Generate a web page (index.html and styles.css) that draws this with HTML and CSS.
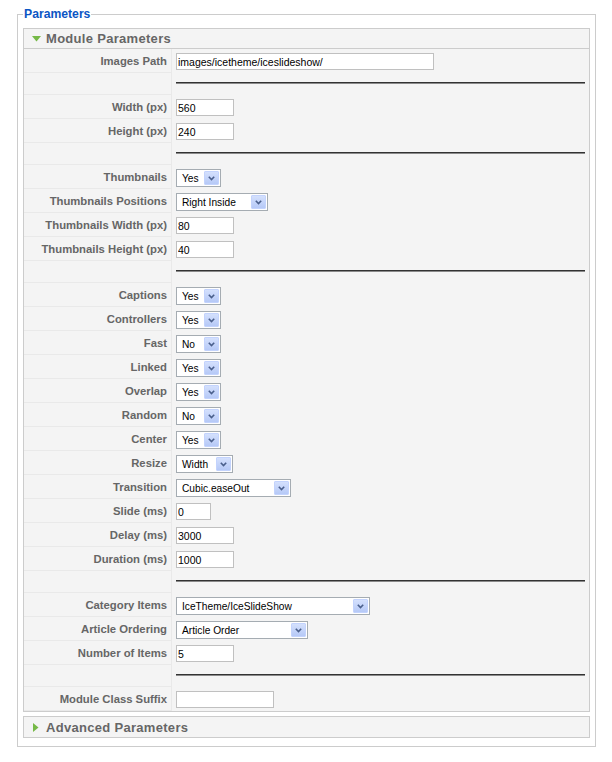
FILE: index.html
```html
<!DOCTYPE html>
<html>
<head>
<meta charset="utf-8">
<title>Parameters</title>
<link rel="stylesheet" href="styles.css">
</head>
<body>
<fieldset class="params">
  <legend class="params-legend">Parameters</legend>
  <div class="panel">
    <h3 class="panel-title open">
      <svg class="tri-down" width="9" height="6" viewBox="0 0 9 6"><polygon points="0,0 9,0 4.5,5.5" fill="#76b947"/></svg>
      <span>Module Parameters</span>
    </h3>
    <div class="paramlist">
      <div class="prow"><div class="key">Images Path</div><div class="val"><input class="txt w258" type="text" value="images/icetheme/iceslideshow/"></div></div>
      <div class="prow spacer"><div class="key"></div><div class="val"><hr class="sep"></div></div>
      <div class="prow"><div class="key">Width (px)</div><div class="val"><input class="txt w58" type="text" value="560"></div></div>
      <div class="prow"><div class="key">Height (px)</div><div class="val"><input class="txt w58" type="text" value="240"></div></div>
      <div class="prow spacer"><div class="key"></div><div class="val"><hr class="sep"></div></div>
      <div class="prow"><div class="key">Thumbnails</div><div class="val"><span class="sel w45"><span class="sel-text">Yes</span><span class="sel-btn"><svg width="7" height="5" viewBox="0 0 7 5"><path d="M0.8 0.8 L3.5 3.6 L6.2 0.8" fill="none" stroke="#4a5f8c" stroke-width="1.6"/></svg></span></span></div></div>
      <div class="prow"><div class="key">Thumbnails Positions</div><div class="val"><span class="sel w92"><span class="sel-text">Right Inside</span><span class="sel-btn"><svg width="7" height="5" viewBox="0 0 7 5"><path d="M0.8 0.8 L3.5 3.6 L6.2 0.8" fill="none" stroke="#4a5f8c" stroke-width="1.6"/></svg></span></span></div></div>
      <div class="prow"><div class="key">Thumbnails Width (px)</div><div class="val"><input class="txt w58" type="text" value="80"></div></div>
      <div class="prow"><div class="key">Thumbnails Height (px)</div><div class="val"><input class="txt w58" type="text" value="40"></div></div>
      <div class="prow spacer"><div class="key"></div><div class="val"><hr class="sep"></div></div>
      <div class="prow"><div class="key">Captions</div><div class="val"><span class="sel w45"><span class="sel-text">Yes</span><span class="sel-btn"><svg width="7" height="5" viewBox="0 0 7 5"><path d="M0.8 0.8 L3.5 3.6 L6.2 0.8" fill="none" stroke="#4a5f8c" stroke-width="1.6"/></svg></span></span></div></div>
      <div class="prow"><div class="key">Controllers</div><div class="val"><span class="sel w45"><span class="sel-text">Yes</span><span class="sel-btn"><svg width="7" height="5" viewBox="0 0 7 5"><path d="M0.8 0.8 L3.5 3.6 L6.2 0.8" fill="none" stroke="#4a5f8c" stroke-width="1.6"/></svg></span></span></div></div>
      <div class="prow"><div class="key">Fast</div><div class="val"><span class="sel w45"><span class="sel-text">No</span><span class="sel-btn"><svg width="7" height="5" viewBox="0 0 7 5"><path d="M0.8 0.8 L3.5 3.6 L6.2 0.8" fill="none" stroke="#4a5f8c" stroke-width="1.6"/></svg></span></span></div></div>
      <div class="prow"><div class="key">Linked</div><div class="val"><span class="sel w45"><span class="sel-text">Yes</span><span class="sel-btn"><svg width="7" height="5" viewBox="0 0 7 5"><path d="M0.8 0.8 L3.5 3.6 L6.2 0.8" fill="none" stroke="#4a5f8c" stroke-width="1.6"/></svg></span></span></div></div>
      <div class="prow"><div class="key">Overlap</div><div class="val"><span class="sel w45"><span class="sel-text">Yes</span><span class="sel-btn"><svg width="7" height="5" viewBox="0 0 7 5"><path d="M0.8 0.8 L3.5 3.6 L6.2 0.8" fill="none" stroke="#4a5f8c" stroke-width="1.6"/></svg></span></span></div></div>
      <div class="prow"><div class="key">Random</div><div class="val"><span class="sel w45"><span class="sel-text">No</span><span class="sel-btn"><svg width="7" height="5" viewBox="0 0 7 5"><path d="M0.8 0.8 L3.5 3.6 L6.2 0.8" fill="none" stroke="#4a5f8c" stroke-width="1.6"/></svg></span></span></div></div>
      <div class="prow"><div class="key">Center</div><div class="val"><span class="sel w45"><span class="sel-text">Yes</span><span class="sel-btn"><svg width="7" height="5" viewBox="0 0 7 5"><path d="M0.8 0.8 L3.5 3.6 L6.2 0.8" fill="none" stroke="#4a5f8c" stroke-width="1.6"/></svg></span></span></div></div>
      <div class="prow"><div class="key">Resize</div><div class="val"><span class="sel w57"><span class="sel-text">Width</span><span class="sel-btn"><svg width="7" height="5" viewBox="0 0 7 5"><path d="M0.8 0.8 L3.5 3.6 L6.2 0.8" fill="none" stroke="#4a5f8c" stroke-width="1.6"/></svg></span></span></div></div>
      <div class="prow"><div class="key">Transition</div><div class="val"><span class="sel w115"><span class="sel-text">Cubic.easeOut</span><span class="sel-btn"><svg width="7" height="5" viewBox="0 0 7 5"><path d="M0.8 0.8 L3.5 3.6 L6.2 0.8" fill="none" stroke="#4a5f8c" stroke-width="1.6"/></svg></span></span></div></div>
      <div class="prow"><div class="key">Slide (ms)</div><div class="val"><input class="txt w35" type="text" value="0"></div></div>
      <div class="prow"><div class="key">Delay (ms)</div><div class="val"><input class="txt w58" type="text" value="3000"></div></div>
      <div class="prow"><div class="key">Duration (ms)</div><div class="val"><input class="txt w58" type="text" value="1000"></div></div>
      <div class="prow spacer"><div class="key"></div><div class="val"><hr class="sep"></div></div>
      <div class="prow"><div class="key">Category Items</div><div class="val"><span class="sel w194"><span class="sel-text">IceTheme/IceSlideShow</span><span class="sel-btn"><svg width="7" height="5" viewBox="0 0 7 5"><path d="M0.8 0.8 L3.5 3.6 L6.2 0.8" fill="none" stroke="#4a5f8c" stroke-width="1.6"/></svg></span></span></div></div>
      <div class="prow"><div class="key">Article Ordering</div><div class="val"><span class="sel w132"><span class="sel-text">Article Order</span><span class="sel-btn"><svg width="7" height="5" viewBox="0 0 7 5"><path d="M0.8 0.8 L3.5 3.6 L6.2 0.8" fill="none" stroke="#4a5f8c" stroke-width="1.6"/></svg></span></span></div></div>
      <div class="prow"><div class="key">Number of Items</div><div class="val"><input class="txt w58" type="text" value="5"></div></div>
      <div class="prow spacer"><div class="key"></div><div class="val"><hr class="sep"></div></div>
      <div class="prow"><div class="key">Module Class Suffix</div><div class="val"><input class="txt w98" type="text" value=""></div></div>
    </div>
  </div>
  <div class="panel">
    <h3 class="panel-title">
      <svg class="tri-right" width="6" height="9" viewBox="0 0 6 9"><polygon points="0,0 5.5,4.5 0,9" fill="#76b947"/></svg>
      <span>Advanced Parameters</span>
    </h3>
  </div>
</fieldset>
</body>
</html>
```

FILE: styles.css
```css
* { box-sizing: border-box; }

html, body {
  margin: 0;
  padding: 0;
  background: #ffffff;
}

body {
  font-family: "Liberation Sans", Arial, sans-serif;
  font-size: 11px;
  color: #333;
}

.params {
  margin: 7px 16px 0 17px;
  padding: 7px 5px 8px 5px;
  border: 1px solid #cccccc;
  min-width: 0;
}

.params-legend {
  padding: 0 1px;
  margin: 0;
  font-size: 12.2px;
  line-height: 14px;
  font-weight: bold;
  color: #0b55c4;
}

.panel {
  border: 1px solid #cccccc;
  background: #f4f4f4;
  margin-bottom: 4px;
}

.panel:last-child { margin-bottom: 0; }

.panel-title {
  margin: 0;
  height: 20px;
  display: flex;
  align-items: center;
  font-size: 13px;
  letter-spacing: 0.3px;
  font-weight: bold;
  color: #666666;
}

.panel-title.open {
  border-bottom: 1px solid #cccccc;
}

.tri-down {
  margin-left: 8px;
  margin-right: 5px;
  margin-top: 1px;
}

.tri-right {
  margin-left: 9px;
  margin-right: 7px;
}

.paramlist {
  display: flex;
  flex-direction: column;
}

.prow {
  display: flex;
  height: 24px;
}

.prow.spacer {
  height: 22px;
}

.key {
  width: 148px;
  flex: none;
  border-right: 1px solid #e9e9e9;
  border-bottom: 1px solid #e9e9e9;
  text-align: right;
  padding-right: 4px;
  font-size: 11.3px;
  font-weight: bold;
  color: #666666;
  display: flex;
  align-items: center;
  justify-content: flex-end;
  white-space: nowrap;
}

.val {
  flex: 1;
  padding: 4px 4px 0 4px;
  display: flex;
  align-items: flex-start;
}

.spacer .val {
  padding-top: 9px;
}

.sep {
  margin: 0;
  width: 100%;
  height: 2px;
  border: 0;
  border-top: 1px solid #333333;
  border-bottom: 1px solid #8a8a8a;
}

.txt {
  height: 17px;
  border: 1px solid #c0c0c0;
  background: #ffffff;
  padding: 0 1px;
  margin: 0;
  font-family: "Liberation Sans", Arial, sans-serif;
  font-size: 10.5px;
  color: #000;
  outline: none;
}

.sel {
  height: 18px;
  border: 1px solid #a5acb2;
  background: #ffffff;
  display: flex;
  align-items: center;
  justify-content: space-between;
  padding: 1px;
}

.sel-text {
  padding-left: 4px;
  font-family: "Liberation Sans", Arial, sans-serif;
  font-size: 10.2px;
  color: #000;
  white-space: nowrap;
}

.sel-btn {
  width: 15px;
  height: 14px;
  flex: none;
  border: 1px solid #c3d3fd;
  background: linear-gradient(#d4e0fd, #b6c9f7);
  border-radius: 1px;
  display: flex;
  align-items: center;
  justify-content: center;
}

.w35 { width: 35px; }
.w45 { width: 45px; }
.w57 { width: 57px; }
.w58 { width: 58px; }
.w92 { width: 92px; }
.w98 { width: 98px; }
.w115 { width: 115px; }
.w132 { width: 132px; }
.w194 { width: 194px; }
.w258 { width: 258px; }
```
